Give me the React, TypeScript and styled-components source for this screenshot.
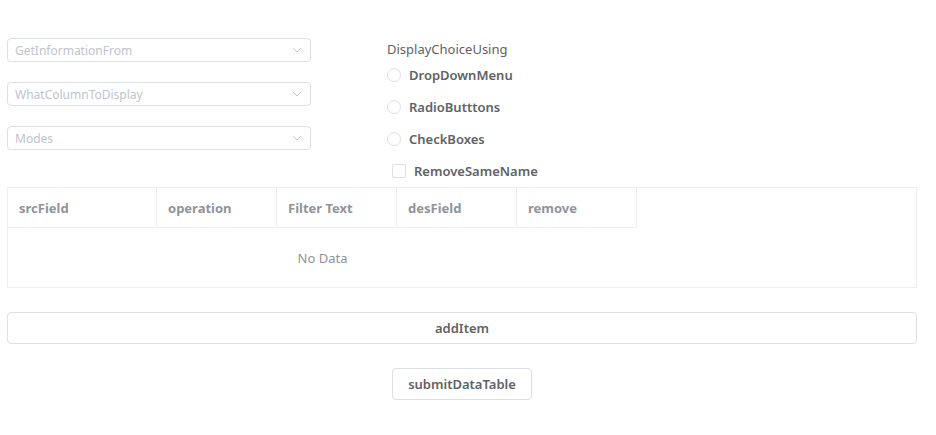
import React from "react";
import styled, { createGlobalStyle } from "styled-components";

const GlobalStyle = createGlobalStyle`
  html, body {
    margin: 0;
    padding: 0;
    background: #fff;
    font-family: "Noto Sans", "Open Sans", sans-serif;
  }
`;

const Page = styled.div`
  width: 910px;
  padding: 38px 19px 0 7px;
`;

const Top = styled.div`
  display: flex;
  align-items: flex-start;
`;

const SelectColumn = styled.div`
  width: 304px;
  display: flex;
  flex-direction: column;
  gap: 20px;
  margin-right: 76px;
`;

const SelectBox = styled.div`
  box-sizing: border-box;
  height: 24px;
  border: 1px solid #dcdfe6;
  border-radius: 4px;
  display: flex;
  align-items: center;
  justify-content: space-between;
  padding: 0 8px 0 7px;
  font-size: 12px;
  color: #c0c4cc;
`;

const ChoiceColumn = styled.div`
  display: flex;
  flex-direction: column;
  margin-top: 1px;
`;

const ChoiceTitle = styled.div`
  height: 20px;
  line-height: 20px;
  font-size: 13px;
  color: #606266;
`;

const ChoiceRow = styled.label<{ $indent?: number }>`
  height: 32px;
  display: flex;
  align-items: center;
  gap: 8px;
  padding-left: ${(p) => p.$indent || 0}px;
  font-size: 13px;
  font-weight: 600;
  color: #606266;
`;

const RadioCircle = styled.span`
  box-sizing: border-box;
  width: 14px;
  height: 14px;
  border: 1px solid #dcdfe6;
  border-radius: 50%;
`;

const CheckSquare = styled.span`
  box-sizing: border-box;
  width: 14px;
  height: 14px;
  border: 1px solid #dcdfe6;
  border-radius: 2px;
`;

const Table = styled.div`
  box-sizing: border-box;
  height: 101px;
  border: 1px solid #ebeef5;
`;

const HeaderRow = styled.div`
  display: flex;
`;

const HeaderCell = styled.div<{ $width: number }>`
  box-sizing: border-box;
  width: ${(p) => p.$width}px;
  height: 40px;
  border-right: 1px solid #ebeef5;
  border-bottom: 1px solid #ebeef5;
  display: flex;
  align-items: center;
  padding-left: 11px;
  font-size: 13px;
  font-weight: 700;
  color: #909399;
`;

const Empty = styled.div`
  width: 629px;
  height: 59px;
  display: flex;
  align-items: center;
  justify-content: center;
  font-size: 13px;
  color: #909399;
`;

const Button = styled.button<{ $wide?: boolean }>`
  box-sizing: border-box;
  height: 32px;
  width: ${(p) => (p.$wide ? "100%" : "auto")};
  padding: 0 15px;
  background: #fff;
  border: 1px solid #dcdfe6;
  border-radius: 4px;
  font-family: inherit;
  font-size: 13px;
  font-weight: 600;
  color: #606266;
`;

const AddRow = styled.div`
  margin-top: 24px;
`;

const SubmitRow = styled.div`
  margin-top: 24px;
  display: flex;
  justify-content: center;
`;

const Chevron = () => (
  <svg width="10" height="10" viewBox="0 0 10 10">
    <path d="M1 3 L5 7 L9 3" fill="none" stroke="#c0c4cc" strokeWidth="1" />
  </svg>
);

const selects = ["GetInformationFrom", "WhatColumnToDisplay", "Modes"];
const choices = ["DropDownMenu", "RadioButttons", "CheckBoxes"];
const columns = [
  { label: "srcField", width: 149 },
  { label: "operation", width: 120 },
  { label: "Filter Text", width: 120 },
  { label: "desField", width: 120 },
  { label: "remove", width: 120 },
];

export default function App() {
  return (
    <Page>
      <GlobalStyle />
      <Top>
        <SelectColumn>
          {selects.map((s) => (
            <SelectBox key={s}>
              <span>{s}</span>
              <Chevron />
            </SelectBox>
          ))}
        </SelectColumn>
        <ChoiceColumn>
          <ChoiceTitle>DisplayChoiceUsing</ChoiceTitle>
          {choices.map((c) => (
            <ChoiceRow key={c}>
              <RadioCircle />
              {c}
            </ChoiceRow>
          ))}
          <ChoiceRow $indent={5}>
            <CheckSquare />
            RemoveSameName
          </ChoiceRow>
        </ChoiceColumn>
      </Top>
      <Table>
        <HeaderRow>
          {columns.map((c) => (
            <HeaderCell key={c.label} $width={c.width}>
              {c.label}
            </HeaderCell>
          ))}
        </HeaderRow>
        <Empty>No Data</Empty>
      </Table>
      <AddRow>
        <Button $wide>addItem</Button>
      </AddRow>
      <SubmitRow>
        <Button>submitDataTable</Button>
      </SubmitRow>
    </Page>
  );
}
